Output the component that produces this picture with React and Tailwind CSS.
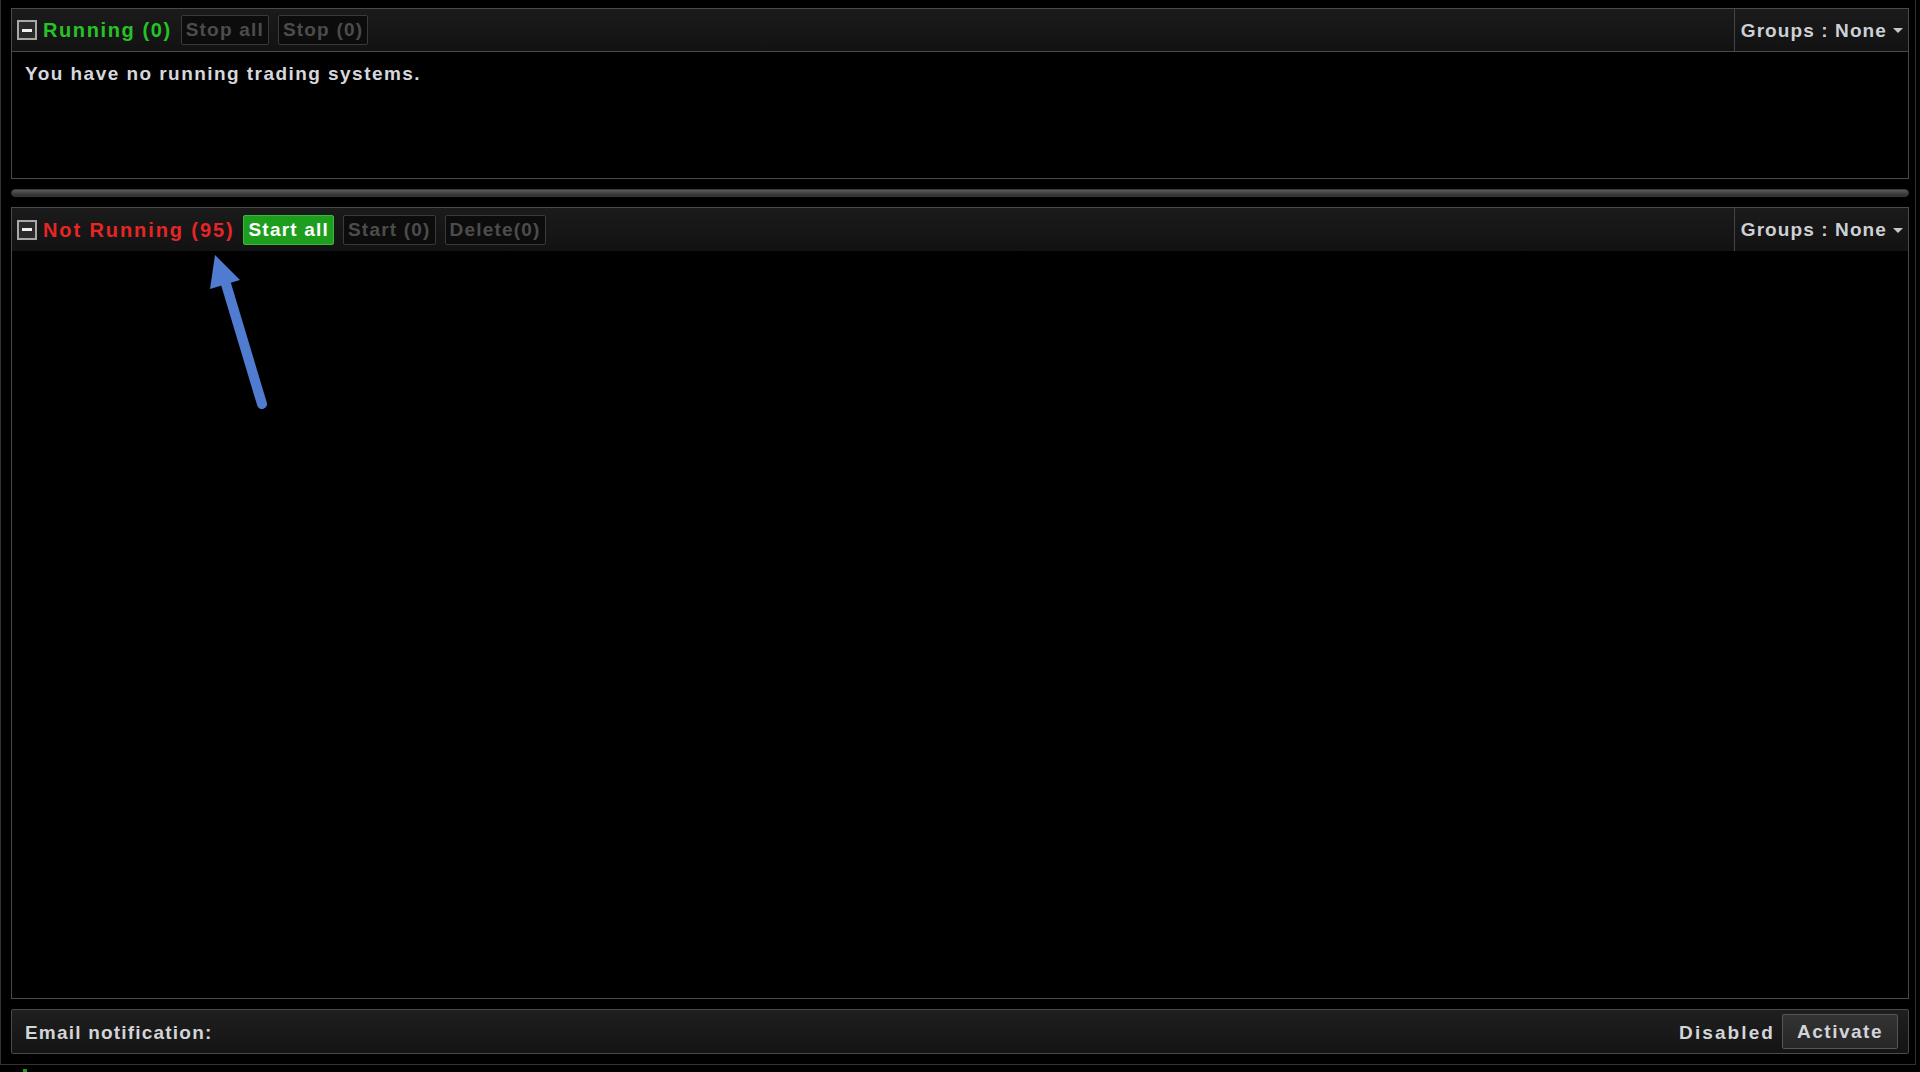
const FONT = "font-['Liberation_Sans',Arial,sans-serif]";

function MinusBox() {
  return (
    <div className="flex h-[20px] w-[20px] items-center justify-center border-2 border-[#a8a8a8] bg-[#2a2a2a]">
      <div className="h-[3px] w-[10px] bg-[#f0f0f0]" />
    </div>
  );
}

function GhostButton({ children }) {
  return (
    <button className="h-[30px] rounded-[2px] border border-[#3a3a3a] bg-[#0c0c0c] px-[4px] text-[19px] font-bold tracking-[1.2px] text-[#4c4c4c]">
      {children}
    </button>
  );
}

function GroupsMenu() {
  return (
    <div className="flex h-full items-center gap-[6px] border-l border-[#444] pl-[6px] pr-[5px] pt-[2px]">
      <span className="text-[19px] font-bold tracking-[1.1px] text-[#cdd0d4]">Groups : None</span>
      <svg width="10" height="6" viewBox="0 0 10 6">
        <path d="M0 0 L10 0 L5 5 Z" fill="#c8c8c8" />
      </svg>
    </div>
  );
}

function PanelHeader({ title, titleClass, bordered, children }) {
  return (
    <div
      className={
        "flex h-[43px] items-center justify-between bg-gradient-to-b from-[#1b1b1b] to-[#121212] " +
        (bordered ? "border-b border-[#4a4a4a]" : "")
      }
    >
      <div className="flex items-center pl-[5px]">
        <MinusBox />
        <span className={"ml-[6px] mr-[9px] text-[20px] font-bold " + titleClass}>{title}</span>
        <div className="flex items-center gap-[9px]">{children}</div>
      </div>
      <GroupsMenu />
    </div>
  );
}

export default function App() {
  return (
    <div className={"relative h-[1072px] w-[1920px] overflow-hidden bg-black " + FONT}>
      <div className="flex h-[1065px] w-[1916px] flex-col border-b border-l border-r border-[#333] pb-[10px] pl-[10px] pr-[6px] pt-[8px]">
        {/* running */}
        <section className="flex h-[171px] flex-col border border-[#4a4a4a] bg-black">
          <PanelHeader title="Running (0)" titleClass="tracking-[1.6px] text-[#26c326]" bordered>
            <GhostButton>Stop all</GhostButton>
            <GhostButton>Stop (0)</GhostButton>
          </PanelHeader>
          <p className="pl-[13px] pt-[8px] text-[19px] font-bold tracking-[1.45px] text-[#d6d8dc]">
            You have no running trading systems.
          </p>
        </section>

        {/* splitter */}
        <div className="mt-[10px] h-[8px] rounded-full border border-[#3a3a3a] bg-gradient-to-b from-[#5a5a5a] to-[#2e2e2e]" />

        {/* not running */}
        <section className="mt-[10px] flex flex-1 flex-col border border-[#4a4a4a] bg-black">
          <PanelHeader title="Not Running (95)" titleClass="tracking-[1.9px] text-[#e62626]">
            <button className="h-[30px] rounded-[2px] border border-[#3bb83b] bg-[#1e9e1e] px-[4px] text-[19px] font-bold tracking-[1.2px] text-white">
              Start all
            </button>
            <GhostButton>Start (0)</GhostButton>
            <GhostButton>Delete(0)</GhostButton>
          </PanelHeader>
          <div className="flex-1" />
        </section>

        {/* email */}
        <div className="mt-[10px] flex h-[45px] items-center justify-between rounded-[2px] border border-[#4a4a4a] bg-gradient-to-b from-[#1f1f1f] to-[#141414] pl-[13px] pr-[10px]">
          <span className="pt-[3px] text-[19px] font-bold tracking-[1.2px] text-[#d2d4d8]">Email notification:</span>
          <div className="flex items-center gap-[7px]">
            <span className="pt-[3px] text-[19px] font-bold tracking-[2.1px] text-[#d2d4d8]">Disabled</span>
            <button className="h-[35px] rounded-[2px] border border-[#555] bg-gradient-to-b from-[#333] to-[#262626] px-[14px] pt-[2px] text-[19px] font-bold tracking-[1.5px] text-[#d2d4d8]">
              Activate
            </button>
          </div>
        </div>
      </div>
      <div className="pl-[23px] pt-[4px]">
        <div className="h-[3px] w-[4px] bg-[#1aa01a]" />
      </div>

      {/* annotation arrow */}
      <svg className="pointer-events-none absolute left-0 top-0" width="1920" height="1072">
        <line x1="262" y1="404" x2="226" y2="284" stroke="#4f7bd0" strokeWidth="10" strokeLinecap="round" />
        <polygon points="215,255 210,289 240,280" fill="#4f7bd0" />
      </svg>
    </div>
  );
}
